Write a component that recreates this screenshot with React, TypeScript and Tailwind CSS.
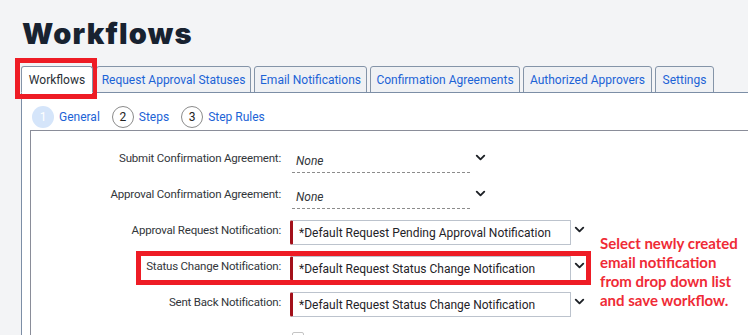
import { ChevronDown } from "lucide-react";

const tabs = [
  { label: "Workflows", w: "w-[72px]", active: true },
  { label: "Request Approval Statuses", w: "w-[155px]" },
  { label: "Email Notifications", w: "w-[113px]" },
  { label: "Confirmation Agreements", w: "w-[150px]" },
  { label: "Authorized Approvers", w: "w-[129px]" },
  { label: "Settings", w: "w-[59px]" },
];

const Chevron = () => (
  <ChevronDown size={15} strokeWidth={3} className="text-[#1d2126] mt-[10px]" />
);

const Label = ({ text }: { text: string }) => (
  <div className="w-[250px] text-right pt-[10px] leading-[16px] text-[11.5px] tracking-[-0.2px]">
    {text}
  </div>
);

const DashedRow = ({ label }: { label: string }) => (
  <div className="flex h-[36px] shrink-0">
    <Label text={label} />
    <div className="ml-[11px] w-[178px] h-[33px] pt-[13px] pl-[4px] border-b border-dashed border-[#8c8c8c] italic leading-[16px] text-[#32363a]">
      None
    </div>
    <div className="ml-[3px]">
      <Chevron />
    </div>
  </div>
);

const BoxRow = ({ label, value }: { label: string; value: string }) => (
  <div className="flex h-[36px] shrink-0">
    <Label text={label} />
    <div className="ml-[9px] mt-[8px] w-[281px] h-[25px] flex items-center pl-[6px] border border-[#bcc3cd] border-l-[3px] border-l-[#a3101a] rounded-l-[2px] text-[#1f2328] leading-none">
      {value}
    </div>
    <div className="ml-[1px]">
      <Chevron />
    </div>
  </div>
);

export default function App() {
  return (
    <div className="relative w-[748px] h-[335px] overflow-hidden bg-[#f3f4f6] font-['Roboto',sans-serif] text-[12px] text-[#32363a] flex flex-col">
      <h1 className="shrink-0 pl-[22px] pt-[18px] h-[66px] font-['Inter',sans-serif] font-black text-[29px] tracking-[1.2px] leading-[32px] text-[#182230]">
        Workflows
      </h1>

      <div className="shrink-0 flex items-end gap-[3px] pl-[21px] h-[27px]">
        {tabs.map((t) => (
          <div
            key={t.label}
            className={`${t.w} h-[27px] flex items-center justify-center rounded-t-[3px] border border-[#8494a8] ${
              t.active
                ? "bg-white border-b-white text-[#2a2f36] relative z-10"
                : "bg-[#eff1f4] text-[#1c63d6]"
            }`}
          >
            {t.label}
          </div>
        ))}
      </div>

      <div className="shrink-0 ml-[21px] -mt-px h-[243px] overflow-hidden bg-white border-l border-t border-[#7c8ea6] flex flex-col">
        <div className="shrink-0 flex items-center pl-[10px] pt-[11px] h-[37px] text-[#1c63d6]">
          <span className="w-[22px] h-[22px] rounded-full bg-[#d5e5fa] text-white flex items-center justify-center">
            1
          </span>
          <span className="ml-[5px]">General</span>
          <span className="ml-[12px] w-[22px] h-[22px] rounded-full border border-[#8b8b8b] text-[#222] flex items-center justify-center">
            2
          </span>
          <span className="ml-[5px]">Steps</span>
          <span className="ml-[12px] w-[22px] h-[22px] rounded-full border border-[#8b8b8b] text-[#222] flex items-center justify-center">
            3
          </span>
          <span className="ml-[5px]">Step Rules</span>
        </div>

        <div className="shrink-0 ml-[8px] h-[220px] border-l border-t border-[#8a8d99] pt-[9px] flex flex-col">
          <DashedRow label="Submit Confirmation Agreement:" />
          <DashedRow label="Approval Confirmation Agreement:" />
          <BoxRow
            label="Approval Request Notification:"
            value="*Default Request Pending Approval Notification"
          />
          <BoxRow
            label="Status Change Notification:"
            value="*Default Request Status Change Notification"
          />
          <BoxRow
            label="Sent Back Notification:"
            value="*Default Request Status Change Notification"
          />
          <div className="shrink-0 ml-[261px] mt-[12px] w-[12px] h-[12px] border border-[#c4c4c4] rounded-[2px]" />
        </div>
      </div>

      {/* annotations */}
      <div className="absolute left-[15px] top-[58px] w-[82px] h-[41px] border-[5px] border-[#ee1c25]" />
      <div className="absolute left-[136px] top-[251px] w-[455px] h-[34px] border-[5px] border-[#ee1c25]" />
      <div className="absolute left-[600px] top-[234px] font-['Lato',sans-serif] font-bold text-[15px] leading-[19px] text-[#ef2b36]">
        Select newly created
        <br />
        email notification
        <br />
        from drop down list
        <br />
        and save workflow.
      </div>
    </div>
  );
}
